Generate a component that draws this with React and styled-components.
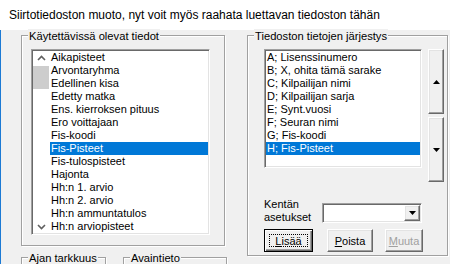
import React from 'react';
import styled, { createGlobalStyle } from 'styled-components';

const GlobalStyle = createGlobalStyle`
  html, body { margin: 0; padding: 0; background: #f0f0f0; }
  body { font-family: "Liberation Sans", Arial, sans-serif; font-size: 11px; color: #000; }
`;

const Window = styled.div`
  width: 450px;
  height: 264px;
  overflow: hidden;
  background: #f0f0f0;
`;

const Caption = styled.div`
  height: 30px;
  box-sizing: border-box;
  background: #fff;
  display: flex;
  align-items: center;
  padding-left: 9px;
  font-size: 12px;
  white-space: nowrap;
`;

const Body = styled.div`
  height: 234px;
  box-sizing: border-box;
  border-left: 1px solid #1c7ad4;
  display: grid;
  grid-template-columns: 204px 201px;
  column-gap: 22px;
  align-items: start;
  padding: 5px 0 0 20px;
`;

const Column = styled.div`
  display: flex;
  flex-direction: column;
  gap: 11px;
`;

const Group = styled.div`
  position: relative;
  box-sizing: border-box;
  flex-shrink: 0;
  width: ${p => p.$w}px;
  height: ${p => p.$h}px;
  padding: ${p => p.$pad || '0'};
  border: 1px solid #a0a0a0;
  box-shadow: inset 1px 1px 0 #fff, 1px 1px 0 #fff;
`;

const Legend = styled.span`
  position: absolute;
  top: -7px;
  left: 6px;
  padding: 0 1px;
  background: #f0f0f0;
  font-size: 11.2px;
  line-height: 14px;
  white-space: nowrap;
`;

const GroupRow = styled.div`
  display: flex;
  gap: 17px;
`;

const ListBox = styled.div`
  box-sizing: border-box;
  width: ${p => p.$w}px;
  height: ${p => p.$h}px;
  background: #fff;
  border: 1px solid;
  border-color: #a0a0a0 #fff #fff #a0a0a0;
  box-shadow: inset 1px 1px 0 #696969, inset -1px -1px 0 #e3e3e3;
  padding: 1px;
  display: flex;
  overflow: hidden;
`;

const ScrollCol = styled.div`
  width: 17px;
  flex-shrink: 0;
  display: flex;
  flex-direction: column;
`;

const ChevronCell = styled.div`
  height: 13px;
  display: flex;
  align-items: center;
  justify-content: center;
  margin-top: ${p => (p.$bottom ? 'auto' : '0')};
`;

const Thumb = styled.div`
  width: 16px;
  height: 23px;
  margin-top: 2px;
  background: #cdcdcd;
`;

const Items = styled.div`
  flex: 1;
  display: flex;
  flex-direction: column;
`;

const Item = styled.div`
  height: 13px;
  line-height: 13px;
  padding-left: 1px;
  white-space: nowrap;
  background: ${p => (p.$selected ? '#0078d7' : 'transparent')};
  color: ${p => (p.$selected ? '#fff' : '#000')};
`;

const TopRow = styled.div`
  display: flex;
  gap: 6px;
  align-items: flex-start;
`;

const ArrowCol = styled.div`
  display: flex;
  flex-direction: column;
  gap: 3px;
`;

const Raised = styled.div`
  box-sizing: border-box;
  width: ${p => p.$w}px;
  height: ${p => p.$h}px;
  background: #f0f0f0;
  border: 1px solid;
  border-color: #fff #696969 #696969 #fff;
  box-shadow: inset -1px -1px 0 #a0a0a0, inset 1px 1px 0 #e3e3e3;
  display: flex;
  align-items: center;
  justify-content: center;
  flex-shrink: 0;
`;

const SettingsRow = styled.div`
  margin-top: 16px;
  display: flex;
  align-items: flex-end;
`;

const FieldLabel = styled.div`
  width: 58px;
  line-height: 13px;
`;

const Combo = styled.div`
  box-sizing: border-box;
  width: 100px;
  height: 20px;
  margin-bottom: 1px;
  background: #fff;
  border: 1px solid;
  border-color: #a0a0a0 #fff #fff #a0a0a0;
  box-shadow: inset 1px 1px 0 #696969, inset -1px -1px 0 #e3e3e3;
  padding: 1px;
  display: flex;
  justify-content: flex-end;
`;

const ButtonRow = styled.div`
  margin-top: 5px;
  display: flex;
`;

const Button = styled.div`
  box-sizing: border-box;
  width: ${p => p.$w}px;
  height: 23px;
  margin-left: ${p => p.$ml || 0}px;
  display: flex;
  align-items: center;
  justify-content: center;
  background: #f0f0f0;
  color: ${p => (p.$disabled ? '#a0a0a0' : '#000')};
  border: 1px solid;
  border-color: ${p => (p.$default ? '#000' : '#fff #696969 #696969 #fff')};
  box-shadow: ${p => (p.$default
    ? 'inset 1px 1px 0 #fff, inset -1px -1px 0 #696969, inset -2px -2px 0 #a0a0a0'
    : 'inset -1px -1px 0 #a0a0a0, inset 1px 1px 0 #e3e3e3')};
`;

const Focus = styled.span`
  box-sizing: border-box;
  width: calc(100% - 8px);
  height: calc(100% - 8px);
  border: 1px dotted #000;
  display: flex;
  align-items: center;
  justify-content: center;
`;

const Chevron = ({ down }) => (
  <svg width="9" height="6" viewBox="0 0 9 6">
    <polyline
      points={down ? '1,1 4.5,4.5 8,1' : '1,5 4.5,1.5 8,5'}
      fill="none"
      stroke="#606060"
      strokeWidth="1.6"
    />
  </svg>
);

const Triangle = ({ up }) => (
  <svg width="7" height="4" viewBox="0 0 7 4">
    <polygon points={up ? '0,4 3.5,0 7,4' : '0,0 7,0 3.5,4'} fill="#000" />
  </svg>
);

const available = [
  'Aikapisteet',
  'Arvontaryhma',
  'Edellinen kisa',
  'Edetty matka',
  'Ens. kierroksen pituus',
  'Ero voittajaan',
  'Fis-koodi',
  'Fis-Pisteet',
  'Fis-tulospisteet',
  'Hajonta',
  'Hh:n 1. arvio',
  'Hh:n 2. arvio',
  'Hh:n ammuntatulos',
  'Hh:n arviopisteet',
];

const order = [
  'A; Lisenssinumero',
  'B; X, ohita tämä sarake',
  'C; Kilpailijan nimi',
  'D; Kilpailijan sarja',
  'E; Synt.vuosi',
  'F; Seuran nimi',
  'G; Fis-koodi',
  'H; Fis-Pisteet',
];

export default function App() {
  return (
    <Window>
      <GlobalStyle />
      <Caption>Siirtotiedoston muoto, nyt voit myös raahata luettavan tiedoston tähän</Caption>
      <Body>
        <Column>
          <Group $w={204} $h={211} $pad="13px 0 0 9px">
            <Legend>Käytettävissä olevat tiedot</Legend>
            <ListBox $w={179} $h={186}>
              <ScrollCol>
                <ChevronCell><Chevron /></ChevronCell>
                <Thumb />
                <ChevronCell $bottom><Chevron down /></ChevronCell>
              </ScrollCol>
              <Items>
                {available.map(name => (
                  <Item key={name} $selected={name === 'Fis-Pisteet'}>{name}</Item>
                ))}
              </Items>
            </ListBox>
          </Group>
          <GroupRow>
            <Group $w={85} $h={40}>
              <Legend>Ajan tarkkuus</Legend>
            </Group>
            <Group $w={104} $h={40}>
              <Legend>Avaintieto</Legend>
            </Group>
          </GroupRow>
        </Column>

        <Group $w={201} $h={221} $pad="13px 0 0 16px">
          <Legend>Tiedoston tietojen järjestys</Legend>
          <TopRow>
            <ListBox $w={158} $h={119}>
              <Items>
                {order.map(name => (
                  <Item key={name} $selected={name.startsWith('H;')}>{name}</Item>
                ))}
              </Items>
            </ListBox>
            <ArrowCol>
              <Raised $w={16} $h={65}><Triangle up /></Raised>
              <Raised $w={16} $h={65}><Triangle /></Raised>
            </ArrowCol>
          </TopRow>
          <SettingsRow>
            <FieldLabel>Kentän asetukset</FieldLabel>
            <Combo>
              <Raised $w={16} $h={16}><Triangle /></Raised>
            </Combo>
          </SettingsRow>
          <ButtonRow>
            <Button $w={49} $default>
              <Focus><u>L</u>isää</Focus>
            </Button>
            <Button $w={46} $ml={14}><u>P</u>oista</Button>
            <Button $w={38} $ml={12} $disabled><u>M</u>uuta</Button>
          </ButtonRow>
        </Group>
      </Body>
    </Window>
  );
}
